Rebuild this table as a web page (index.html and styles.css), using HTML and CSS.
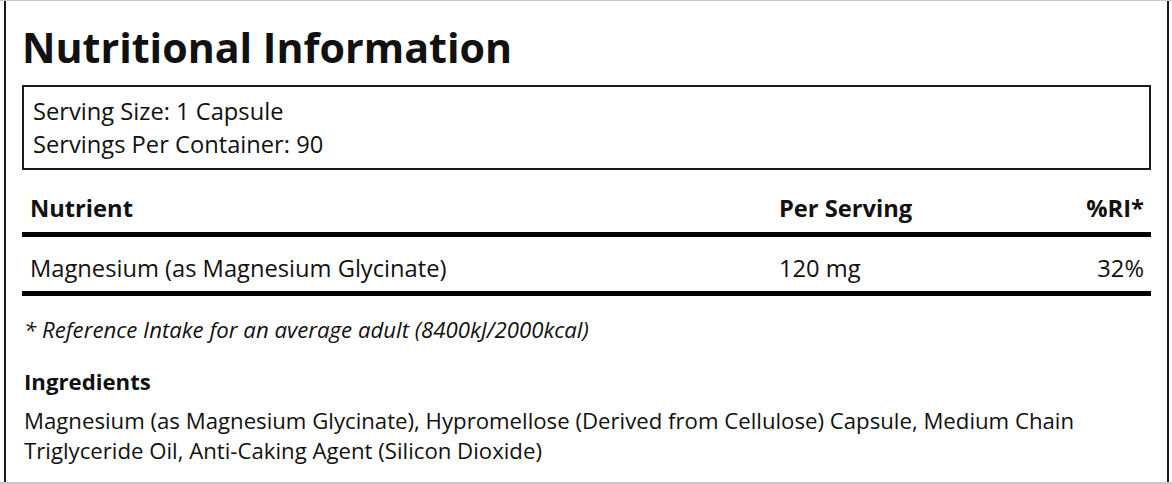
FILE: index.html
```html
<!DOCTYPE html>
<html>
<head>
<meta charset="utf-8">
<link rel="stylesheet" href="styles.css">
</head>
<body>
<div class="frame">
  <div class="card">
    <h1 class="title">Nutritional Information</h1>
    <div class="serving">
      <div>Serving Size: 1 Capsule</div>
      <div>Servings Per Container: 90</div>
    </div>
    <table class="facts">
      <thead>
        <tr>
          <th class="c-name">Nutrient</th>
          <th class="c-amt">Per Serving</th>
          <th class="c-ri">%RI*</th>
        </tr>
      </thead>
      <tbody>
        <tr>
          <td class="c-name">Magnesium (as Magnesium Glycinate)</td>
          <td class="c-amt">120 mg</td>
          <td class="c-ri">32%</td>
        </tr>
      </tbody>
    </table>
    <p class="note">* Reference Intake for an average adult (8400kJ/2000kcal)</p>
    <h2 class="ing-title">Ingredients</h2>
    <p class="ing-text">Magnesium (as Magnesium Glycinate), Hypromellose (Derived from Cellulose) Capsule, Medium Chain Triglyceride Oil, Anti-Caking Agent (Silicon Dioxide)</p>
  </div>
</div>
</body>
</html>
```
FILE: styles.css
```css
html, body {
  margin: 0;
  padding: 0;
  background: #ffffff;
}
body {
  font-family: "Open Sans", "Liberation Sans", sans-serif;
  color: #111;
  width: 1172px;
  height: 484px;
  overflow: hidden;
}
.frame {
  height: 484px;
  box-sizing: border-box;
  border-top: 1px solid #c9c9c9;
  border-bottom: 2px solid #c9c9c9;
  padding: 0 3px 0 4px;
  background: #fff;
}
.card {
  height: 100%;
  box-sizing: border-box;
  border-left: 2px solid #1a1a1a;
  border-right: 2px solid #1a1a1a;
  padding: 19px 16px 0 16px;
}
.title {
  margin: 0;
  font-size: 41.2px;
  font-weight: 700;
  line-height: 54px;
  letter-spacing: 0;
}
.serving {
  margin-top: 11px;
  border: 2px solid #1a1a1a;
  padding: 8px 10px 8px 9px;
  font-size: 23.7px;
  line-height: 33px;
  height: 85px;
  box-sizing: border-box;
}
.facts {
  width: 100%;
  border-collapse: collapse;
  table-layout: fixed;
  margin-top: 20px;
  font-size: 23.7px;
}
.facts th,
.facts td {
  box-sizing: border-box;
}
.facts th {
  font-weight: 700;
  text-align: left;
  padding: 4px 8px 10px 8px;
  border-bottom: 5px solid #000;
  line-height: 28px;
}
.facts td {
  padding: 17px 8px 9px 8px;
  border-bottom: 5px solid #000;
  line-height: 28px;
}
.facts .c-amt { width: 300px; }
.facts .c-ri { width: 80px; text-align: right; padding-right: 7px; }
.note {
  margin: 20px 0 0 2px;
  font-style: italic;
  font-size: 22.2px;
  line-height: 28px;
}
.ing-title {
  margin: 24px 0 0 2px;
  font-size: 22.2px;
  font-weight: 700;
  line-height: 28px;
}
.ing-text {
  margin: 10px 0 0 2px;
  font-size: 22.2px;
  line-height: 30px;
}
```
